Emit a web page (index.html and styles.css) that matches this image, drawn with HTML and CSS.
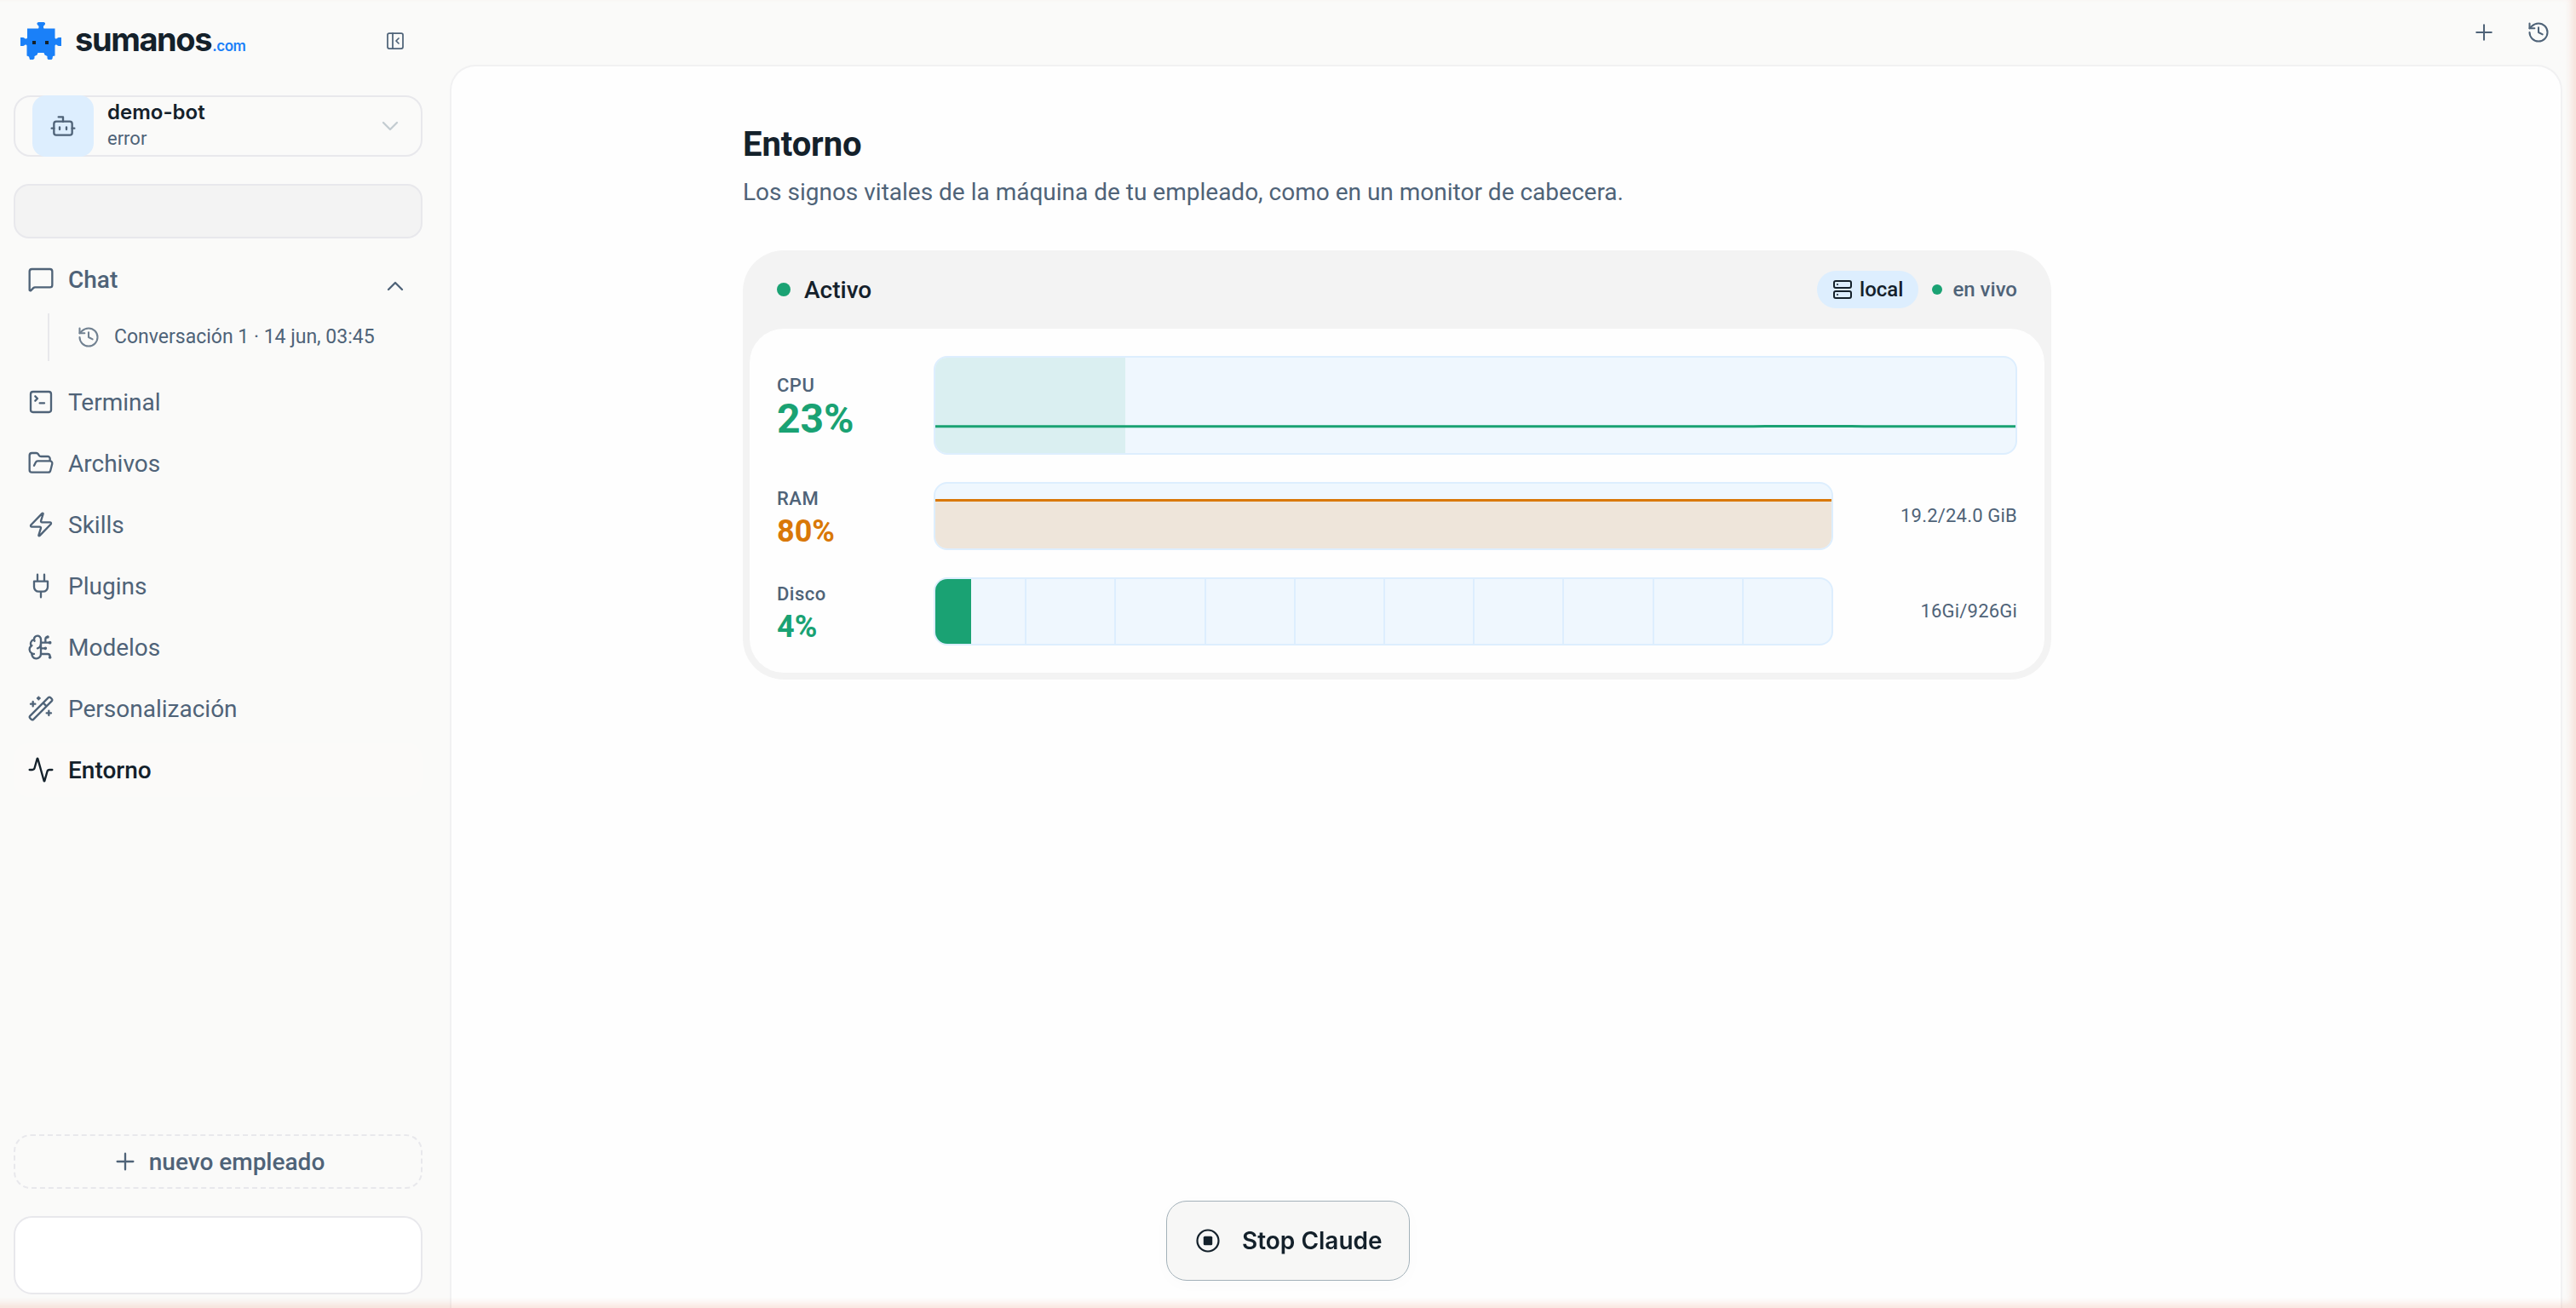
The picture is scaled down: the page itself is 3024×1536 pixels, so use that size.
FILE: index.html
```html
<!DOCTYPE html>
<html lang="es">
<head>
  <meta charset="UTF-8">
  <meta name="viewport" content="width=device-width, initial-scale=1.0">
  <title>Entorno - sumanos.com</title>
  <link rel="stylesheet" href="styles.css">
</head>
<body>

  <div class="app">
    <aside class="sidebar">
      <div class="brand">
        <svg class="brand-logo" viewBox="0 0 48 44">
          <path fill="#1a80f8" d="M8 7.500h12c1 0 1.500-.5 1.500-1.500v-1c0-1-2-1.500-2-3V1l1.500-1h6.500L29 1v1c0 1.500-2 2-2 3v1c0 1 .5 1.500 1.500 1.500h12V18c0 1 .5 1.500 1.500 1.500s1.500-1.500 3-1.500h3v10h-3c-1.500 0-2-1.500-3-1.500s-1.500.5-1.500 1.500v11.500l-2.500.5-.5 3-1 1h-4l-1-1.500V40l-3-1.500-1-2.500h-7l-1 2.500-3 1.500v2.500L15 44h-4l-1-3.500-2.500-1V28c0-1-.5-1.500-1.500-1.500s-1.500 1.500-3 1.500H0V18h3c1.500 0 2 1.500 3 1.500S8 19 8 18z"/>
          <path fill="#14212b" d="M14 22h4v4h-4zM29 22h4v4h-4z"/>
        </svg>
        <span class="brand-name">sumanos</span><span class="brand-tld">.com</span>
        <svg class="icon icon-24 collapse" viewBox="0 0 24 24"><rect width="18" height="18" x="3" y="3" rx="2"/><path d="M9 3v18M16 15l-3-3 3-3"/></svg>
      </div>

      <div class="bot-card">
        <div class="bot-avatar">
          <svg class="icon" viewBox="0 0 24 24"><path d="M12 8V4H8"/><rect width="16" height="12" x="4" y="8" rx="2"/><path d="M2 14h2M20 14h2M15 13v2M9 13v2"/></svg>
        </div>
        <div class="bot-info">
          <div class="bot-name">demo-bot</div>
          <div class="bot-status">error</div>
        </div>
        <svg class="icon bot-chevron" viewBox="0 0 24 24"><path d="m6 9 6 6 6-6"/></svg>
      </div>

      <div class="placeholder"></div>

      <nav class="nav">
        <a class="nav-item open">
          <svg class="icon" viewBox="0 0 24 24"><path d="M22 17a2 2 0 0 1-2 2H6.828a2 2 0 0 0-1.414.586l-2.202 2.202A.71.71 0 0 1 2 21.286V5a2 2 0 0 1 2-2h16a2 2 0 0 1 2 2z"/></svg>
          <span>Chat</span>
          <svg class="icon nav-chevron" viewBox="0 0 24 24"><path d="m18 15-6-6-6 6"/></svg>
        </a>
        <div class="nav-sub">
          <svg class="icon icon-28" viewBox="0 0 24 24"><path d="M3 12a9 9 0 1 0 9-9 9.750 9.750 0 0 0-6.740 2.740L3 8"/><path d="M3 3v5h5M12 7v5l4 2"/></svg>
          <span>Conversación 1 · 14 jun, 03:45</span>
        </div>
        <a class="nav-item">
          <svg class="icon" viewBox="0 0 24 24"><path d="m7 11 2-2-2-2M11 13h4"/><rect width="18" height="18" x="3" y="3" rx="2"/></svg>
          <span>Terminal</span>
        </a>
        <a class="nav-item">
          <svg class="icon" viewBox="0 0 24 24"><path d="m6 14 1.500-2.900A2 2 0 0 1 9.240 10H20a2 2 0 0 1 1.940 2.500l-1.540 6a2 2 0 0 1-1.950 1.500H4a2 2 0 0 1-2-2V5a2 2 0 0 1 2-2h3.900a2 2 0 0 1 1.690.9l.810 1.200a2 2 0 0 0 1.670.9H18a2 2 0 0 1 2 2v2"/></svg>
          <span>Archivos</span>
        </a>
        <a class="nav-item">
          <svg class="icon" viewBox="0 0 24 24"><path d="M4 14a1 1 0 0 1-.780-1.630l9.900-10.200a.5.5 0 0 1 .860.460l-1.920 6.020A1 1 0 0 0 13 10h7a1 1 0 0 1 .780 1.630l-9.900 10.200a.5.5 0 0 1-.860-.460l1.920-6.020A1 1 0 0 0 11 14z"/></svg>
          <span>Skills</span>
        </a>
        <a class="nav-item">
          <svg class="icon" viewBox="0 0 24 24"><path d="M12 22v-5M9 8V2M15 8V2M18 8v5a4 4 0 0 1-4 4h-4a4 4 0 0 1-4-4V8Z"/></svg>
          <span>Plugins</span>
        </a>
        <a class="nav-item">
          <svg class="icon" viewBox="0 0 24 24"><path d="M12 5a3 3 0 1 0-5.997.125 4 4 0 0 0-2.526 5.770 4 4 0 0 0 .556 6.588A4 4 0 1 0 12 18Z"/><path d="M9 13a4.500 4.500 0 0 0 3-4M6.003 5.125A3 3 0 0 0 6.401 6.500M3.477 10.896a4 4 0 0 1 .585-.396M6 18a4 4 0 0 1-1.967-.516M12 13h4M12 18h6a2 2 0 0 1 2 2v1M12 8h8M16 8V5a2 2 0 0 1 2-2"/><circle cx="16" cy="13" r=".5"/><circle cx="18" cy="3" r=".5"/><circle cx="20" cy="21" r=".5"/><circle cx="20" cy="8" r=".5"/></svg>
          <span>Modelos</span>
        </a>
        <a class="nav-item">
          <svg class="icon" viewBox="0 0 24 24"><path d="m21.640 3.640-1.280-1.280a1.210 1.210 0 0 0-1.720 0L2.360 18.640a1.210 1.210 0 0 0 0 1.720l1.280 1.280a1.200 1.200 0 0 0 1.720 0L21.640 5.360a1.200 1.200 0 0 0 0-1.720M14 7l3 3M5 6v4M19 14v4M10 2v2M7 8H3M21 16h-4M11 3H9"/></svg>
          <span>Personalización</span>
        </a>
        <a class="nav-item active">
          <svg class="icon" viewBox="0 0 24 24"><path d="M22 12h-2.480a2 2 0 0 0-1.930 1.460l-2.350 8.360a.25.25 0 0 1-.480 0L9.240 2.180a.25.25 0 0 0-.480 0l-2.350 8.360A2 2 0 0 1 4.490 12H2"/></svg>
          <span>Entorno</span>
        </a>
      </nav>

      <button class="new-employee">
        <svg class="icon" viewBox="0 0 24 24"><path d="M5 12h14M12 5v14"/></svg>
        <span>nuevo empleado</span>
      </button>
      <div class="user-box"></div>
    </aside>

    <div class="content">
      <div class="topbar">
        <svg class="icon icon-28" viewBox="0 0 24 24"><path d="M4.500 12h15M12 4.500v15"/></svg>
        <svg class="icon icon-28" viewBox="0 0 24 24"><path d="M3 12a9 9 0 1 0 9-9 9.750 9.750 0 0 0-6.740 2.740L3 8"/><path d="M3 3v5h5M12 7v5l4 2"/></svg>
      </div>

      <main class="panel">
        <div class="page">
          <h1>Entorno</h1>
          <p class="subtitle">Los signos vitales de la máquina de tu empleado, como en un monitor de cabecera.</p>

          <section class="monitor">
            <div class="monitor-header">
              <span class="dot"></span>
              <span class="state">Activo</span>
              <span class="badge">
                <svg class="icon icon-24" viewBox="0 0 24 24"><rect width="20" height="8" x="2" y="2" rx="2"/><rect width="20" height="8" x="2" y="14" rx="2"/><path d="M6 6h.01M6 18h.01"/></svg>
                local
              </span>
              <span class="dot small"></span>
              <span class="live">en vivo</span>
            </div>

            <div class="monitor-body">
              <div class="metric cpu">
                <div class="metric-label">
                  <div class="label">CPU</div>
                  <div class="value">23%</div>
                </div>
                <div class="chart">
                  <div class="fill"></div>
                  <svg class="trace" viewBox="0 0 1268 112" preserveAspectRatio="none"><polyline points="0,80.800 960,80.800 975,80.500 1075,80.500 1090,80.800 1268,80.800"/></svg>
                </div>
              </div>

              <div class="metric ram">
                <div class="metric-label">
                  <div class="label">RAM</div>
                  <div class="value">80%</div>
                </div>
                <div class="chart">
                  <div class="level"></div>
                </div>
                <div class="amount">19.2/24.0 GiB</div>
              </div>

              <div class="metric disk">
                <div class="metric-label">
                  <div class="label">Disco</div>
                  <div class="value">4%</div>
                </div>
                <div class="chart">
                  <div class="used" style="width: 4%"></div>
                </div>
                <div class="amount">16Gi/926Gi</div>
              </div>
            </div>
          </section>
        </div>
      </main>
    </div>
  </div>

  <!-- Screen overlay while the agent is in control -->
  <div class="glow"></div>
  <button class="stop-btn">
    <svg viewBox="0 0 28 28"><circle cx="14" cy="14" r="12.500" fill="none" stroke="#14212b" stroke-width="2.200"/><rect x="8.800" y="8.800" width="10.400" height="10.400" rx="1.500" fill="#14212b"/></svg>
    Stop Claude
  </button>

</body>
</html>
```

FILE: styles.css
```css
* {
  box-sizing: border-box;
}
body {
  margin: 0;
  font-family: Roboto, sans-serif;
  font-size: 28px;
  color: #14212b;
  background-color: #fafaf9;
}
button {
  font-family: inherit;
}
.app {
  display: flex;
  height: 1536px;
  overflow: hidden;
}
.icon {
  width: 32px;
  height: 32px;
  flex: none;
  fill: none;
  stroke: currentColor;
  stroke-width: 1.75;
  stroke-linecap: round;
  stroke-linejoin: round;
}
.icon-28 {
  width: 28px;
  height: 28px;
}
.icon-24 {
  width: 24px;
  height: 24px;
}

/* Sidebar */
.sidebar {
  display: flex;
  flex-direction: column;
  width: 528px;
  padding: 0 32px 16px 16px;
  color: #4f6378;
}
.brand {
  display: flex;
  align-items: center;
  height: 96px;
  padding: 0 20px 0 8px;
}
.brand-logo {
  width: 48px;
  height: 44px;
}
.brand-name {
  margin: -4px 0 0 16px;
  font-family: Inter, sans-serif;
  font-size: 38px;
  font-weight: 700;
  letter-spacing: -1.4px;
  line-height: 44px;
  color: #14212b;
}
.brand-tld {
  margin: 11px 0 0 1px;
  font-family: Inter, sans-serif;
  font-size: 17px;
  font-weight: 600;
  letter-spacing: -0.4px;
  color: #1a80f8;
}
.collapse {
  margin-left: auto;
}
.bot-card {
  display: flex;
  align-items: center;
  height: 72px;
  margin-top: 16px;
  padding: 0 20px;
  border: 2px solid #e8e8ec;
  border-radius: 20px;
}
.bot-avatar {
  display: flex;
  align-items: center;
  justify-content: center;
  width: 72px;
  height: 72px;
  margin: -2px 0;
  border-radius: 16px;
  background-color: #ddeefe;
}
.bot-info {
  margin: -2px 0 0 16px;
}
.bot-name {
  font-family: Inter, sans-serif;
  font-size: 24px;
  font-weight: 600;
  line-height: 32px;
  color: #14212b;
}
.bot-status {
  font-size: 22px;
  line-height: 30px;
}
.bot-chevron {
  margin-left: auto;
  color: #c3ccd1;
}
.placeholder {
  height: 64px;
  margin-top: 32px;
  border: 2px solid #e8e8ec;
  border-radius: 18px;
  background-color: #f3f3f3;
}
.nav {
  display: flex;
  flex-direction: column;
  gap: 8px;
  margin-top: 16px;
}
.nav-item {
  display: flex;
  align-items: center;
  gap: 16px;
  height: 64px;
  padding: 0 16px;
  border-radius: 20px;
}
.nav-item.open {
  font-weight: 500;
}
.nav-item.active {
  font-weight: 500;
  color: #14212b;
  background-color: #fbfaf9;
}
.nav-chevron {
  margin: 16px 0 0 auto;
}
.nav-sub {
  display: flex;
  align-items: center;
  gap: 16px;
  height: 56px;
  margin: 0 0 8px 40px;
  padding-left: 32px;
  border-left: 2px solid #e8e8ec;
  font-size: 23px;
}
.nav-sub .icon {
  opacity: 0.8;
}
.nav-sub span {
  margin-top: -2px;
}
.new-employee {
  display: flex;
  align-items: center;
  justify-content: center;
  gap: 12px;
  height: 64px;
  margin-top: auto;
  border: 2px dashed #e8e8ec;
  border-radius: 20px;
  background: none;
  color: #4f6378;
  font-size: 28px;
  font-weight: 500;
}
.user-box {
  height: 92px;
  margin-top: 32px;
  border: 2px solid #e8e8ec;
  border-radius: 22px;
  background-color: #fff;
}

/* Content */
.content {
  display: flex;
  flex-direction: column;
  flex: 1;
  padding-right: 16px;
}
.topbar {
  display: flex;
  align-items: center;
  justify-content: flex-end;
  gap: 36px;
  height: 76px;
  padding-right: 14px;
  color: #4f6378;
}
.panel {
  flex: 1;
  border: 2px solid #f1f1f2;
  border-bottom: none;
  border-radius: 30px 30px 0 0;
  background-color: #fefefe;
}
.page {
  width: 1536px;
  margin-left: 342px;
  padding-top: 68px;
}
h1 {
  margin: 0;
  font-size: 40px;
  font-weight: 700;
  line-height: 48px;
  letter-spacing: -0.1px;
}
.subtitle {
  margin: 15px 0 0;
  line-height: 34px;
  color: #4f6378;
}
.monitor {
  margin-top: 51px;
  padding: 0 8px 8px;
  border-radius: 48px;
  background-color: #f3f3f3;
}
.monitor-header {
  display: flex;
  align-items: center;
  height: 92px;
  padding: 0 32px;
}
.dot {
  width: 16px;
  height: 16px;
  border-radius: 50%;
  background-color: #1aa273;
}
.dot.small {
  width: 12px;
  height: 12px;
  margin: 0 12px 0 16px;
}
.state {
  margin-left: 16px;
  font-weight: 500;
}
.badge {
  display: flex;
  align-items: center;
  gap: 8px;
  height: 44px;
  margin-left: auto;
  padding: 0 18px;
  border-radius: 22px;
  background-color: #ddeefe;
  font-size: 24px;
  font-weight: 500;
}
.badge .icon {
  stroke-width: 2;
}
.live {
  font-size: 24px;
  font-weight: 500;
  color: #4f6378;
}
.monitor-body {
  display: flex;
  flex-direction: column;
  gap: 32px;
  padding: 32px;
  border-radius: 40px;
  background-color: #fefefe;
}
.metric {
  display: grid;
  grid-template-columns: 152px 1fr 184px;
  gap: 32px;
  align-items: center;
  height: 80px;
}
.metric.cpu {
  grid-template-columns: 152px 1fr;
  height: 116px;
}
.label {
  font-size: 22px;
  font-weight: 500;
  line-height: 30px;
  letter-spacing: 0.5px;
  color: #4f6378;
}
.value {
  margin-top: 5px;
  font-size: 36px;
  font-weight: 700;
  line-height: 36px;
  color: #1aa273;
}
.cpu .metric-label {
  padding-top: 2px;
}
.cpu .value {
  margin-top: 0;
  font-size: 48px;
  line-height: 48px;
}
.ram .value {
  color: #d97808;
}
.chart {
  display: grid;
  height: 100%;
  border: 2px solid #ddeefe;
  border-radius: 16px;
  background-color: #eff7fe;
  overflow: hidden;
}
.chart > * {
  grid-area: 1 / 1;
}
.fill {
  width: 223px;
  background-color: #daeff1;
}
.trace {
  width: 100%;
  height: 112px;
}
.trace polyline {
  fill: none;
  stroke: #1aa273;
  stroke-width: 3;
}
.level {
  align-self: end;
  height: 58px;
  border-top: 3px solid #d97808;
  background-color: #eee5da;
}
.disk .chart {
  background-image: repeating-linear-gradient(to right, #ddeefe 0 2px, transparent 2px 10%);
}
.used {
  background-color: #1aa273;
}
.amount {
  margin-top: -2px;
  font-size: 22px;
  letter-spacing: 0.2px;
  text-align: right;
  color: #4f6378;
}

/* Overlay */
.glow {
  position: fixed;
  inset: 0 0 0 -20px;
  box-shadow: inset -5px -5px 9px rgba(235, 130, 95, 0.2);
  pointer-events: none;
}
.stop-btn {
  position: fixed;
  left: 50%;
  bottom: 32px;
  transform: translateX(-50%);
  display: flex;
  align-items: center;
  gap: 26px;
  width: 286px;
  height: 94px;
  padding: 0 0 0 34px;
  border: 1px solid #a3b1b9;
  border-radius: 24px;
  background-color: #f7f7f6;
  box-shadow: 0 4px 20px rgba(0, 0, 0, 0.02);
  font-family: Inter, sans-serif;
  font-size: 28px;
  font-weight: 600;
  color: #14212b;
  white-space: nowrap;
}
.stop-btn svg {
  width: 28px;
  height: 28px;
}
```
